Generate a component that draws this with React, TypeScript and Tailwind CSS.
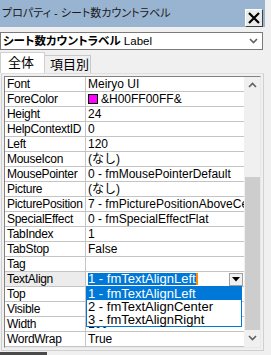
type Row = { name: string; value?: string; swatch?: string };

const ROWS: Row[] = [
  { name: "Font", value: "Meiryo UI" },
  { name: "ForeColor", value: "&H00FF00FF&", swatch: "#ff00ff" },
  { name: "Height", value: "24" },
  { name: "HelpContextID", value: "0" },
  { name: "Left", value: "120" },
  { name: "MouseIcon", value: "(なし)" },
  { name: "MousePointer", value: "0 - fmMousePointerDefault" },
  { name: "Picture", value: "(なし)" },
  { name: "PicturePosition", value: "7 - fmPicturePositionAboveCenter" },
  { name: "SpecialEffect", value: "0 - fmSpecialEffectFlat" },
  { name: "TabIndex", value: "1" },
  { name: "TabStop", value: "False" },
  { name: "Tag", value: "" },
  { name: "TextAlign" },
  { name: "Top", value: "" },
  { name: "Visible", value: "" },
  { name: "Width", value: "100" },
  { name: "WordWrap", value: "True" },
];

const OPTIONS = ["1 - fmTextAlignLeft", "2 - fmTextAlignCenter", "3 - fmTextAlignRight"];

function Chevron({ up }: { up?: boolean }) {
  return (
    <svg width="9" height="6" viewBox="0 0 9 6" className={up ? "rotate-180" : ""}>
      <path d="M1 1 L4.5 4.5 L8 1" fill="none" stroke="#606060" strokeWidth="1.6" />
    </svg>
  );
}

export default function App() {
  return (
    <div className="w-[271px] h-[355px] bg-[#f0f0f0] overflow-hidden text-black font-['Liberation_Sans','Noto_Sans_CJK_JP',sans-serif]">
      {/* title bar */}
      <div className="w-[265px] h-[27px] bg-[#99b4d1] flex justify-between">
        <span className="pl-[2px] pt-[6px] text-[11px] leading-[14px] text-[#1a1a1a] [font-feature-settings:'palt']">
          プロパティ - シート数カウントラベル
        </span>
        <div className="mt-[9px] mr-[2px] w-[18px] h-[18px] bg-[#ebebeb] border border-t-white border-l-white border-r-[#404040] border-b-[#404040] flex items-center justify-center">
          <svg width="12" height="12" viewBox="0 0 12 12">
            <path d="M1 1 L11 11 M11 1 L1 11" stroke="#000" strokeWidth="2.2" />
          </svg>
        </div>
      </div>

      {/* object combo */}
      <div className="mt-[5px] w-[263px] h-[18px] bg-white border border-[#7a7a7a] flex items-center justify-between px-[2px]">
        <span className="text-[11.5px] leading-[14px] [font-feature-settings:'palt']">
          <b>シート数カウントラベル</b> Label
        </span>
        <span className="mr-[2px]">
          <Chevron />
        </span>
      </div>

      {/* tabs */}
      <div className="mt-[2px] h-[21px] flex items-end">
        <div className="w-[45px] h-[21px] bg-white border border-b-0 border-[#d0d0d0] text-[13px] leading-[18px] pl-[7px] pt-[1px]">全体</div>
        <div className="w-[46px] h-[18px] bg-[#f0f0f0] border border-b-0 border-l-0 border-[#c8c8c8] text-[13px] leading-[17px] pl-[5px]">項目別</div>
      </div>

      {/* grid panel */}
      <div className="w-[263px] h-[278px] ml-[1px] border border-[#d0d0d0] border-t-[#e0e0e0] p-[2px] bg-[#f0f0f0]">
        <div className="relative w-full h-full border border-[#828282] border-r-[#e8e8e8] border-b-[#e8e8e8] flex bg-white">
          <div className="flex-1 min-w-0 flex flex-col">
            {ROWS.map((r) => (
              <div key={r.name} className="h-[15px] flex border-b border-[#c4c4c4] text-[12px] leading-[14px] shrink-0">
                <div
                  className={`w-[81px] shrink-0 pl-[2px] border-r border-[#c4c4c4] whitespace-nowrap overflow-hidden tracking-[-0.3px] ${
                    r.name === "TextAlign" ? "bg-[#ececec]" : ""
                  }`}
                >
                  {r.name}
                </div>
                <div className="flex-1 min-w-0 pl-[2px] whitespace-nowrap overflow-hidden flex items-center gap-[3px]">
                  {r.swatch && <span className="inline-block w-[10px] h-[10px] bg-[#ff00ff] border border-black shrink-0" />}
                  {r.name === "TextAlign" ? (
                    <div className="flex-1 flex items-center justify-between pr-[1px] text-[13px]">
                      <span className="bg-[#0078d7] text-white leading-[12px] border-r-2 border-[#ff8c00]">
                        1 - fmTextAlignLeft
                      </span>
                      <span className="w-[14px] h-[13px] bg-[#f0f0f0] border border-[#a0a0a0] flex items-center justify-center">
                        <svg width="8" height="5" viewBox="0 0 8 5">
                          <path d="M0 0 H8 L4 4.5 Z" fill="#000" />
                        </svg>
                      </span>
                    </div>
                  ) : (
                    r.value
                  )}
                </div>
              </div>
            ))}
          </div>

          {/* scrollbar */}
          <div className="w-[16px] shrink-0 bg-[#f0f0f0] flex flex-col items-center">
            <div className="h-[15px] flex items-center justify-center">
              <Chevron up />
            </div>
            <div className="w-[15px] h-[85px]" />
            <div className="w-[15px] h-[153px] bg-[#cdcdcd]" />
            <div className="h-[15px] flex items-center justify-center">
              <Chevron />
            </div>
          </div>

          {/* open dropdown list */}
          <div className="absolute left-[81px] top-[209px] w-[156px] border border-[#0078d7] bg-white text-[13px] leading-[13px] flex flex-col">
            {OPTIONS.map((o, i) => (
              <div key={o} className={`h-[13px] pl-[1px] whitespace-nowrap ${i === 0 ? "bg-[#0078d7] text-white" : ""}`}>
                {o}
              </div>
            ))}
          </div>
        </div>
      </div>

      <div className="w-[47px] h-[3px] mt-[1px] bg-[#4a4a4a]" />
    </div>
  );
}
